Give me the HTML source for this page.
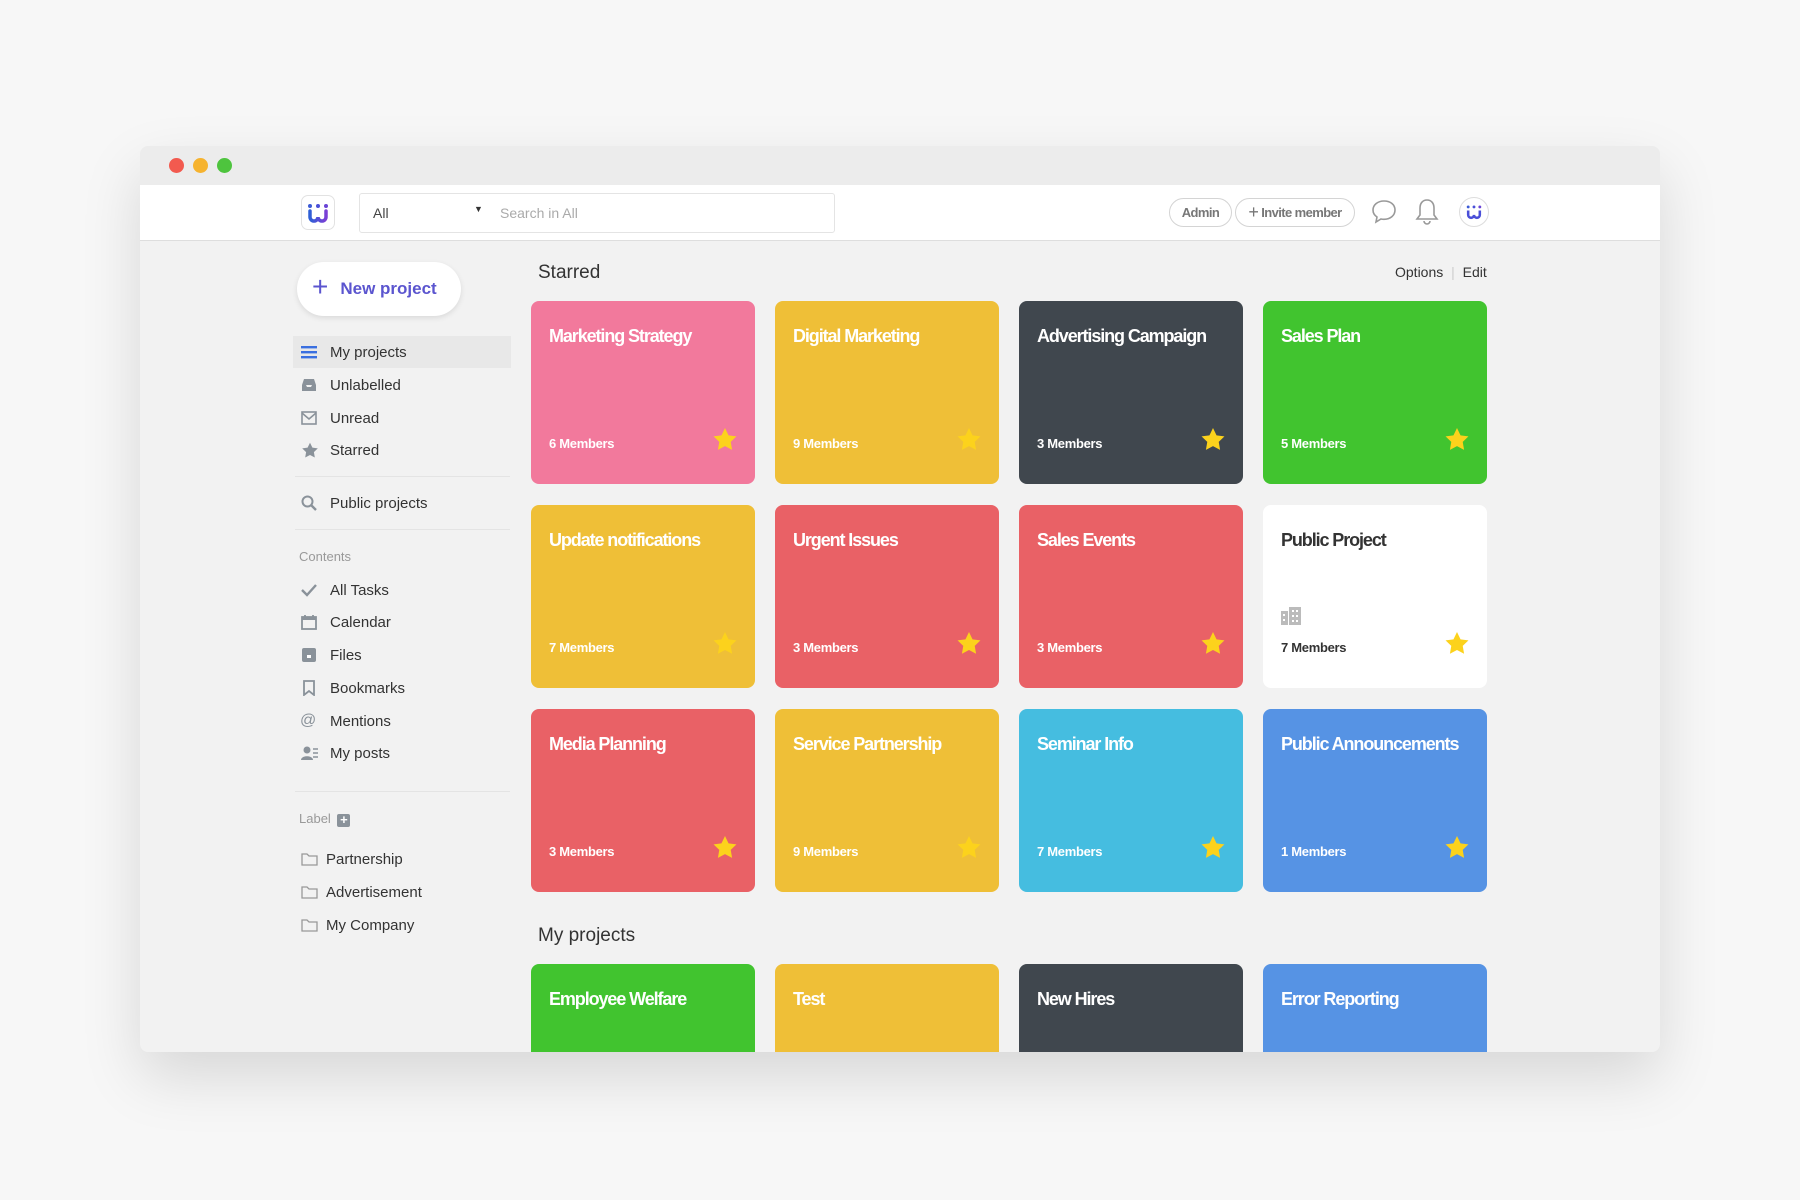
<!DOCTYPE html>
<html><head><meta charset="utf-8"><style>
*{box-sizing:border-box;margin:0;padding:0}
body{width:1800px;height:1200px;background:#f7f7f7;font-family:"Liberation Sans",sans-serif;position:relative;overflow:hidden}
.win{position:absolute;left:140px;top:146px;width:1520px;height:906px;background:#f2f2f2;border-radius:8px;overflow:hidden;box-shadow:0 25px 60px rgba(0,0,0,.13)}
.tb{position:absolute;left:0;top:0;width:100%;height:39px;background:#ececec}
.dot{position:absolute;top:12px;width:15px;height:15px;border-radius:50%}
.nav{position:absolute;left:0;top:39px;width:100%;height:56px;background:#fff;border-bottom:1px solid #dedede}
.abs{position:absolute}
.logo{left:161px;top:10px;width:34px;height:35px;border:1px solid #e2e2e2;border-radius:7px;background:#fff;display:flex;align-items:center;justify-content:center}
.search{left:219px;top:8px;width:476px;height:40px;border:1px solid #e4e4e4;border-radius:3px;background:#fff;font-size:14px}
.pill{top:13px;height:29px;border:1px solid #d4d4d4;border-radius:15px;font-size:13px;font-weight:bold;color:#777;display:flex;align-items:center;justify-content:center;letter-spacing:-.6px}
.side{font-size:15px;color:#333}
.item{position:absolute;left:157px;width:210px;height:32px;display:flex;align-items:center}
.item svg{position:absolute;left:4px}
.item span{position:absolute;left:33px}
.sec{position:absolute;left:159px;font-size:13px;color:#999}
.hr{position:absolute;left:155px;width:215px;height:1px;background:#e4e4e4}
.card{position:absolute;width:224px;height:183px;border-radius:8px;color:#fff}
.card .t{position:absolute;left:18px;top:25px;font-size:18px;font-weight:bold;letter-spacing:-1.1px;white-space:nowrap}
.card .m{position:absolute;left:18px;top:135px;font-size:13px;font-weight:bold;letter-spacing:-.3px}
.card svg.s{position:absolute;right:17px;top:126px}
h2{position:absolute;font-weight:normal;font-size:19px;color:#333}
</style></head><body>
<div class="win">
 <div class="tb">
  <div class="dot" style="left:29px;background:#f25a4f"></div>
  <div class="dot" style="left:53px;background:#f6b32f"></div>
  <div class="dot" style="left:77px;background:#4ec43e"></div>
 </div>
 <div class="nav">
  <div class="abs logo"><svg width="24" height="22" viewBox="0 0 24 22"><circle cx="4" cy="4" r="2" fill="#3b5bd6"/><circle cx="12" cy="4" r="2" fill="#4a4fd8"/><circle cx="20" cy="4" r="2" fill="#6a44d6"/><path d="M4 9 v6 a4 4 0 0 0 8 0 a4 4 0 0 0 8 0 v-6" stroke="url(#g)" stroke-width="3.5" fill="none" stroke-linecap="round"/><defs><linearGradient id="g"><stop offset="0" stop-color="#2e5fd6"/><stop offset="1" stop-color="#7b3fd5"/></linearGradient></defs></svg></div>
  <div class="abs search"><span class="abs" style="left:13px;top:11px;color:#444">All</span><span class="abs" style="left:114px;top:10px;font-size:9px;color:#333">▼</span><span class="abs" style="left:140px;top:11px;color:#aaa">Search in All</span></div>
  <div class="abs pill" style="left:1029px;width:63px">Admin</div>
  <div class="abs pill" style="left:1095px;width:120px"><span style="font-size:18px;font-weight:normal;margin-right:3px">+</span>Invite member</div>
  <svg class="abs" style="left:1230px;top:13px" width="28" height="28" viewBox="0 0 28 28"><path d="M14 3C7.5 3 3 7 3 12c0 3 1.6 5.4 4 7l-1 5 5-3c1 .2 2 .3 3 .3 6.5 0 11-4 11-9.3S20.5 3 14 3z" fill="none" stroke="#999" stroke-width="1.6"/></svg>
  <svg class="abs" style="left:1275px;top:12px" width="24" height="30" viewBox="0 0 24 30"><path d="M12 3c-4.5 0-7 3.5-7 8v7l-3 4h20l-3-4v-7c0-4.5-2.5-8-7-8zM9 24a3 3 0 0 0 6 0" fill="none" stroke="#999" stroke-width="1.6"/></svg>
  <div class="abs" style="left:1319px;top:12px;width:30px;height:30px;border:1px solid #ddd;border-radius:50%;display:flex;align-items:center;justify-content:center"><svg width="18" height="16" viewBox="0 0 24 22"><circle cx="4" cy="4" r="2" fill="#3b5bd6"/><circle cx="12" cy="4" r="2" fill="#4a4fd8"/><circle cx="20" cy="4" r="2" fill="#6a44d6"/><path d="M4 9 v6 a4 4 0 0 0 8 0 a4 4 0 0 0 8 0 v-6" stroke="#4a4fd8" stroke-width="3.5" fill="none"/></svg></div>
 </div>

 <div class="side">
  <div class="abs" style="left:157px;top:116px;width:164px;height:54px;background:#fff;border-radius:27px;box-shadow:0 2px 6px rgba(0,0,0,.1);display:flex;align-items:center;color:#5b55cf;font-weight:bold;font-size:17px"><span style="font-size:28px;font-weight:normal;margin:0 12px 4px 15px">+</span>New project</div>
  <div class="item" style="top:190px;background:#e8e8e8;width:218px;left:153px"><svg style="left:8px" width="16" height="14"><rect y="1" width="16" height="2.4" fill="#3a6fe0"/><rect y="6" width="16" height="2.4" fill="#3a6fe0"/><rect y="11" width="16" height="2.4" fill="#3a6fe0"/></svg><span style="left:37px">My projects</span></div>
  <div class="item" style="top:223px"><svg width="16" height="14"><path d="M1 7 3 1h10l2 6v6H1z M1 7h4l1 2h4l1-2h4" fill="#8a929a"/></svg><span>Unlabelled</span></div>
  <div class="item" style="top:256px"><svg width="16" height="14"><rect x="1" y="1" width="14" height="12" fill="none" stroke="#8a929a" stroke-width="1.6"/><path d="M1 2l7 6 7-6" fill="none" stroke="#8a929a" stroke-width="1.6"/></svg><span>Unread</span></div>
  <div class="item" style="top:288px"><svg width="18" height="17" viewBox="0 0 24 24"><path d="M12 1l3.4 7 7.6 1-5.5 5.3 1.3 7.6L12 18.3 5.2 21.9l1.3-7.6L1 9l7.6-1z" fill="#8a929a"/></svg><span>Starred</span></div>
  <div class="hr" style="top:330px"></div>
  <div class="item" style="top:341px"><svg width="16" height="16"><circle cx="6.5" cy="6.5" r="5" fill="none" stroke="#8a929a" stroke-width="2"/><path d="M10 10l5 5" stroke="#8a929a" stroke-width="2.4"/></svg><span>Public projects</span></div>
  <div class="hr" style="top:383px"></div>
  <div class="sec" style="top:403px">Contents</div>
  <div class="item" style="top:428px"><svg width="16" height="14"><path d="M1 7l5 5 9-10" fill="none" stroke="#8a929a" stroke-width="2.4"/></svg><span>All Tasks</span></div>
  <div class="item" style="top:460px"><svg width="16" height="16"><rect x="1" y="3" width="14" height="12" fill="none" stroke="#8a929a" stroke-width="1.8"/><rect x="1" y="3" width="14" height="3" fill="#8a929a"/><path d="M4 1v3M12 1v3" stroke="#8a929a" stroke-width="1.8"/></svg><span>Calendar</span></div>
  <div class="item" style="top:493px"><svg width="16" height="16"><rect x="1" y="1" width="14" height="14" rx="2" fill="#8a929a"/><rect x="6" y="8" width="4" height="3" fill="#fff"/></svg><span>Files</span></div>
  <div class="item" style="top:526px"><svg width="16" height="16"><path d="M3 1h10v14l-5-4-5 4z" fill="none" stroke="#8a929a" stroke-width="1.8"/></svg><span>Bookmarks</span></div>
  <div class="item" style="top:559px"><span style="left:3px;color:#8a929a;font-size:16px">@</span><span>Mentions</span></div>
  <div class="item" style="top:591px"><svg width="18" height="15"><circle cx="6" cy="4" r="3.5" fill="#8a929a"/><path d="M0 14c0-5 12-5 12 0z" fill="#8a929a"/><path d="M12 3h5M12 7h5M12 11h5" stroke="#8a929a" stroke-width="1.5"/></svg><span>My posts</span></div>
  <div class="hr" style="top:645px"></div>
  <div class="sec" style="top:665px">Label <span style="display:inline-block;width:13px;height:13px;background:#8a929a;border-radius:2px;color:#fff;font-size:13px;line-height:12px;text-align:center;font-weight:bold;vertical-align:-1px;margin-left:3px">+</span></div>
  <div class="item" style="top:697px"><svg width="17" height="14"><path d="M1 2h5l2 2h8v9H1z" fill="none" stroke="#999" stroke-width="1.3"/></svg><span style="left:29px">Partnership</span></div>
  <div class="item" style="top:730px"><svg width="17" height="14"><path d="M1 2h5l2 2h8v9H1z" fill="none" stroke="#999" stroke-width="1.3"/></svg><span style="left:29px">Advertisement</span></div>
  <div class="item" style="top:763px"><svg width="17" height="14"><path d="M1 2h5l2 2h8v9H1z" fill="none" stroke="#999" stroke-width="1.3"/></svg><span style="left:29px">My Company</span></div>
 </div>

 <h2 style="left:398px;top:116px">Starred</h2>
 <div class="abs" style="left:1255px;top:118px;font-size:14px;color:#333">Options <span style="color:#ccc;margin:0 4px">|</span> Edit</div>
 <h2 style="left:398px;top:779px">My projects</h2>

 <div id="cards"></div>
</div>
<script>
var S='<svg class="s" width="26" height="25" viewBox="0 0 24 24"><path d="M12 1l3.4 7 7.6 1-5.5 5.3 1.3 7.6L12 18.3 5.2 21.9l1.3-7.6L1 9l7.6-1z" fill="#fcd21c"/></svg>';
var d=[["Marketing Strategy","#f2799c",6],["Digital Marketing","#efbf37",9],["Advertising Campaign","#40474e",3],["Sales Plan","#41c42f",5],
["Update notifications","#efbf37",7],["Urgent Issues","#e96166",3],["Sales Events","#e96166",3],["Public Project","#fff",7],
["Media Planning","#e96166",3],["Service Partnership","#efbf37",9],["Seminar Info","#45bde0",7],["Public Announcements","#5693e4",1],
["Employee Welfare","#41c42f",0],["Test","#efbf37",0],["New Hires","#40474e",0],["Error Reporting","#5693e4",0]];
var X=[391,635,879,1123],Y=[155,359,563,818],h="";
d.forEach(function(c,i){var x=X[i%4],y=Y[Math.floor(i/4)],w=c[1]=="#fff";
h+='<div class="card" style="left:'+x+'px;top:'+y+'px;background:'+c[1]+(w?';color:#333':'')+'"><div class="t">'+c[0]+'</div>'+
(c[2]?'<div class="m">'+c[2]+' Members</div>'+S:'')+
(w?'<svg style="position:absolute;left:18px;top:102px" width="20" height="18"><rect x="0" y="4" width="7" height="14" fill="#bbb"/><rect x="8" y="0" width="12" height="18" fill="#bbb"/><g fill="#fff"><rect x="2" y="7" width="2" height="2"/><rect x="2" y="12" width="2" height="2"/><rect x="11" y="3" width="2" height="2"/><rect x="15" y="3" width="2" height="2"/><rect x="11" y="8" width="2" height="2"/><rect x="15" y="8" width="2" height="2"/><rect x="11" y="13" width="2" height="2"/><rect x="15" y="13" width="2" height="2"/></g></svg>':'')+'</div>';});
document.getElementById("cards").innerHTML=h;
</script>
</body></html>
